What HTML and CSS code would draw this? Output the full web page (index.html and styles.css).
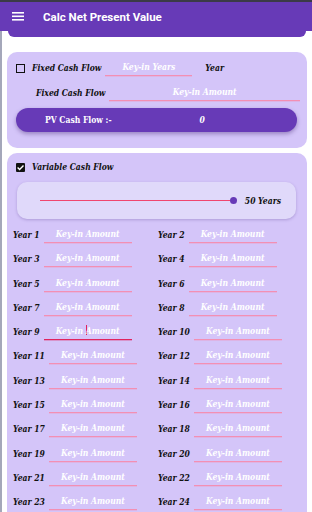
FILE: index.html
```html
<!DOCTYPE html>
<html lang="en">

<head>
    <meta charset="UTF-8">
    <meta name="viewport" content="width=device-width, initial-scale=1.0">
    <title>Calc Net Present Value</title>
    <link rel="stylesheet" href="styles.css">
</head>

<body>

    <div class="status"></div>
    <header class="appbar">
        <svg class="menu" width="12" height="9" viewBox="0 0 12 9">
            <rect x="0" y="0" width="12" height="1.6" fill="#fff" />
            <rect x="0" y="3.5" width="12" height="1.6" fill="#fff" />
            <rect x="0" y="7" width="12" height="1.6" fill="#fff" />
        </svg>
        <h1>Calc Net Present Value</h1>
    </header>

    <main class="content">
        <div class="tail"></div>

        <section class="card fixed">
            <div class="row">
                <span class="check"></span>
                <span class="label">Fixed Cash Flow</span>
                <div class="field years">Key-in Years</div>
                <span class="label unit">Year</span>
            </div>
            <div class="row">
                <span class="label indent">Fixed Cash Flow</span>
                <div class="field wide">Key-in Amount</div>
            </div>
            <button type="button" class="pv">
                <span class="pv-title">PV Cash Flow :-</span>
                <span class="pv-value">0</span>
            </button>
        </section>

        <section class="card variable">
            <div class="row">
                <span class="check checked">
                    <svg width="9" height="9" viewBox="0 0 9 9">
                        <path d="M1.6 4.6 L3.6 6.5 L7.5 2.5" fill="none" stroke="#fff" stroke-width="1.4" />
                    </svg>
                </span>
                <span class="label">Variable Cash Flow</span>
            </div>

            <div class="slider-card">
                <div class="track"></div>
                <span class="thumb"></span>
                <span class="label">50 Years</span>
            </div>

            <div class="years-grid" id="years"></div>
        </section>
    </main>

    <script>
        const grid = document.getElementById('years');
        for (let i = 1; i <= 24; i++) {
            const cell = document.createElement('div');
            cell.className = 'year';
            const caret = i === 9 ? ' focused' : '';
            const text = i === 9 ? 'Key-in <i class="caret"></i>Amount' : 'Key-in Amount';
            cell.innerHTML = `
                <span class="label">Year ${i}</span>
                <div class="field${caret}">${text}</div>
            `;
            grid.appendChild(cell);
        }
    </script>

</body>

</html>
```

FILE: styles.css
```css
body {
    margin: 0;
    background-color: #fff;
    font-family: 'DejaVu Serif Condensed', 'DejaVu Serif', serif;
    font-stretch: condensed;
    overflow: hidden;
}

.status {
    height: 2px;
    background-color: #3b3a48;
}

.appbar {
    height: 29px;
    background-color: #673ab7;
    display: flex;
    align-items: center;
    padding-left: 12px;
}

.appbar h1 {
    margin: 0 0 0 19px;
    font-family: 'Roboto', sans-serif;
    font-stretch: normal;
    font-size: 11.5px;
    font-weight: 700;
    color: #fff;
}

.menu {
    display: block;
}

.content {
    border-left: 2px solid #a4a7ba;
    padding: 0 5px;
    min-height: 500px;
}

.tail {
    height: 6px;
    margin: 0 1px;
    background-color: #673ab7;
    border-radius: 0 0 9px 9px;
}

.card {
    background-color: #d4c5f9;
    border-radius: 10px;
}

.fixed {
    margin-top: 15px;
    padding: 8px 7px 16px 9px;
}

.variable {
    margin-top: 5px;
    padding: 7px 6px 20px 6px;
}

.row {
    display: flex;
    align-items: center;
    height: 16px;
}

.row + .row {
    margin-top: 9px;
}

.label {
    font-size: 8.5px;
    font-weight: bold;
    font-style: italic;
    color: #111;
    white-space: nowrap;
}

.check {
    width: 7px;
    height: 7px;
    border: 1px solid #111;
    margin-right: 7px;
    display: inline-block;
}

.check.checked {
    width: 9px;
    height: 9px;
    border: none;
    background-color: #111;
    border-radius: 1px;
}

.check svg {
    display: block;
}

.variable .row {
    height: 14px;
    padding-left: 3px;
}

.field {
    height: 15px;
    border-bottom: 1px solid #f38fb3;
    box-shadow: 0 1px 0 rgba(243, 143, 179, 0.3);
    color: #fff;
    font-size: 8.5px;
    font-weight: bold;
    font-style: italic;
    text-align: center;
    line-height: 15px;
    white-space: nowrap;
}

.field.focused {
    border-bottom-color: #e0245e;
    box-shadow: 0 1px 0 rgba(224, 36, 94, 0.3);
}

.caret {
    display: inline-block;
    width: 1px;
    height: 10px;
    background-color: #e0245e;
    vertical-align: -1px;
    margin-right: -1px;
}

.years {
    width: 87px;
    margin-left: 4px;
}

.unit {
    margin-left: 13px;
}

.indent {
    padding-left: 20px;
}

.wide {
    flex: 1;
    margin-left: 4px;
}

.pv {
    margin-top: 7px;
    margin-right: 3px;
    width: calc(100% - 3px);
    height: 24px;
    border: none;
    border-radius: 12px;
    background-color: #673ab7;
    box-shadow: 0 2px 4px rgba(40, 10, 90, 0.35);
    display: flex;
    align-items: center;
    padding: 0;
    color: #fff;
    font-family: 'DejaVu Serif Condensed', 'DejaVu Serif', serif;
    font-stretch: condensed;
    font-size: 8.5px;
    font-weight: bold;
}

.pv-title {
    margin-left: 29px;
}

.pv-value {
    margin-left: 88px;
    font-style: italic;
}

.slider-card {
    margin: 8px 5px 0 4px;
    height: 37px;
    background-color: #e0d9fa;
    border-radius: 10px;
    box-shadow: 0 1px 3px rgba(60, 30, 120, 0.25);
    display: flex;
    align-items: center;
    padding: 0 15px 0 23px;
}

.track {
    flex: 1;
    height: 1px;
    background-color: #f0466e;
}

.thumb {
    width: 7px;
    height: 7px;
    border-radius: 50%;
    background-color: #673ab7;
    margin-right: 8px;
}

.years-grid {
    margin-top: 4px;
    display: grid;
    grid-template-columns: 145px 1fr;
    grid-template-rows: 24px 25px 24px 24px 24px 25px 24px 24px 25px 24px 24px 24px;
}

.year {
    display: flex;
    align-items: flex-start;
}

.year .label {
    margin-top: 6px;
    line-height: 12px;
}

.year .field {
    width: 88px;
    margin-left: 4px;
    margin-top: 4px;
}
```
